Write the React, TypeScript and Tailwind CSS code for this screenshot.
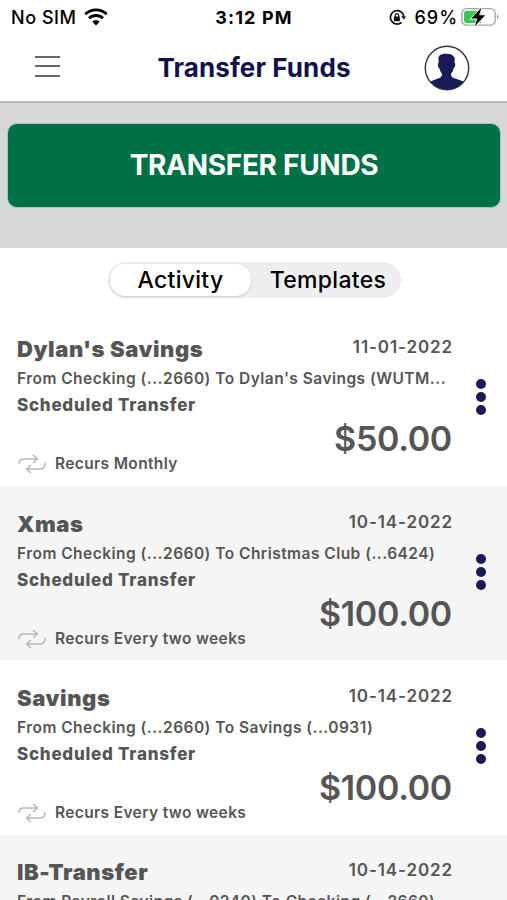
import { useState } from 'react'

interface Transfer {
  name: string
  date: string
  route: string
  status?: string
  amount?: string
  recurs?: string
}

const TRANSFERS: Transfer[] = [
  {
    name: "Dylan's Savings",
    date: '11-01-2022',
    route: "From Checking (...2660) To Dylan's Savings (WUTM...",
    status: 'Scheduled Transfer',
    amount: '$50.00',
    recurs: 'Recurs Monthly',
  },
  {
    name: 'Xmas',
    date: '10-14-2022',
    route: 'From Checking (...2660) To Christmas Club (...6424)',
    status: 'Scheduled Transfer',
    amount: '$100.00',
    recurs: 'Recurs Every two weeks',
  },
  {
    name: 'Savings',
    date: '10-14-2022',
    route: 'From Checking (...2660) To Savings (...0931)',
    status: 'Scheduled Transfer',
    amount: '$100.00',
    recurs: 'Recurs Every two weeks',
  },
  {
    name: 'IB-Transfer',
    date: '10-14-2022',
    route: 'From Payroll Savings (...0240) To Checking (...2660)',
  },
]

function WifiIcon() {
  return (
    <svg width="24" height="18" viewBox="0 0 24 18" fill="none" stroke="#000" strokeWidth="2.9">
      <path d="M1.3 6.3a15.2 15.2 0 0 1 21.4 0" />
      <path d="M5 10.3a10 10 0 0 1 14 0" />
      <path d="M8.2 13.5a5.4 5.4 0 0 1 7.6 0L12 17.4Z" fill="#000" stroke="none" />
    </svg>
  )
}

function RotationLockIcon() {
  return (
    <svg width="17" height="17" viewBox="0 0 17 17" fill="none" stroke="#111" strokeWidth="1.7">
      <path d="M12.6 13.4A6.7 6.7 0 1 1 14.8 7.3" />
      <path d="M12.3 7.3h4.7l-2.2 3.5Z" fill="#111" stroke="none" />
      <rect x="4.9" y="7.6" width="6" height="4.6" rx=".6" fill="#111" stroke="none" />
      <path d="M6.2 8V6.4a1.7 1.7 0 0 1 3.4 0V8" strokeWidth="1.2" />
    </svg>
  )
}

function BatteryIcon() {
  return (
    <svg width="39" height="20" viewBox="0 0 39 20">
      <rect x=".8" y="1.6" width="33.4" height="16.6" rx="4.8" fill="#fff" stroke="#a5a5a5" strokeWidth="1.3" />
      <path d="M6 3.8h14v12.2H6a3 3 0 0 1-3-3V6.8a3 3 0 0 1 3-3Z" fill="#35c759" />
      <path d="M36 7.3c2 .7 2 4.5 0 5.2Z" fill="#a5a5a5" />
      <path
        d="M20.5.5 10.2 11.6h6.1L13.7 19.6 24.2 8.2h-6.1Z"
        fill="#000"
        stroke="#fff"
        strokeWidth="1.6"
        paintOrder="stroke"
      />
    </svg>
  )
}

function AvatarIcon() {
  return (
    <svg width="46" height="46" viewBox="0 0 46 46">
      <path
        d="M6 37c3-2 6.500-2.800 9.500-4 2.300-1 2.800-2.500 2.200-4.700-1.200-1.200-1.900-3-2.200-4.800-1.300-.6-1.900-3.300-1.500-5 .1-.5.500-.7.800-.7-.8-4.500-.3-6.800 1.500-7.700 1.300-1.100 3.500-1.400 5.700-1.400 3.200-.1 5.900.6 7.300 2.200 1.700 1.300 1.700 3.900 1 6.900.5 0 .8.300.9.800.3 1.700-.3 4.100-1.700 4.800-.3 1.800-1 3.600-2.200 4.800-.6 2.200-.1 3.700 2.200 4.700 3 1.200 7.500 2 10.500 4A22 22 0 0 1 6 37Z"
        fill="#1b1a58"
      />
      <circle cx="23" cy="23" r="21.7" fill="none" stroke="#333" strokeWidth="1.4" />
    </svg>
  )
}

function RecurIcon() {
  return (
    <svg width="28" height="20" viewBox="0 0 28 20" fill="none" stroke="#b9b9b9" strokeWidth="1.6" strokeLinecap="round" strokeLinejoin="round">
      <path d="M1 9.5C1 6.500 3 5 6 5h13.500M15.500 1.500 19.500 5l-4 3.500" />
      <path d="M27 9.500c0 3.500-2 5.500-5 5.500H8.500M12.500 11.500l-4 3.500 4 3.500" />
    </svg>
  )
}

function StatusBar() {
  return (
    <div className="flex h-[34px] shrink-0 items-center justify-between pl-[11px] pr-[7px] text-[18px]">
      <div className="flex flex-1 items-center gap-[7px] font-medium">
        <span className="tracking-[0.55px]">No SIM</span>
        <WifiIcon />
      </div>
      <span className="mr-[3px] font-bold tracking-[1.15px]">3:12 PM</span>
      <div className="flex flex-1 items-center justify-end font-medium">
        <RotationLockIcon />
        <span className="ml-2 mr-[3px] tracking-[1px]">69%</span>
        <BatteryIcon />
      </div>
    </div>
  )
}

function TransferRow({ transfer }: { transfer: Transfer }) {
  return (
    <li className="flex h-[174.3px] shrink-0 pl-[17px] text-[#555] even:bg-[#f5f5f5]">
      <div className="w-[435px] pt-[25px]">
        <div className="flex h-7 items-start justify-between">
          <h2 className="text-[22px] leading-[27px] font-black tracking-[0.6px]">{transfer.name}</h2>
          <span className="mr-[-1px] text-[17px] leading-[23px] font-semibold tracking-[0.9px]">{transfer.date}</span>
        </div>
        <p className="mt-[5px] text-[15.5px] leading-5 font-semibold tracking-[0.47px] whitespace-nowrap">
          {transfer.route}
        </p>
        {transfer.status && (
          <>
            <p className="mt-[6px] text-[17px] leading-5 font-extrabold tracking-[0.75px]">{transfer.status}</p>
            <div className="flex h-[61px] justify-between">
              <div className="flex items-end gap-[9px] pb-[2px] pl-px">
                <RecurIcon />
                <span className="text-[15.5px] leading-5 font-semibold tracking-[0.36px]">{transfer.recurs}</span>
              </div>
              <span className="mt-1 text-[34px] leading-10 font-semibold tracking-[-0.3px]">{transfer.amount}</span>
            </div>
          </>
        )}
      </div>
      {transfer.status && (
        <button aria-label="More options" className="mt-[68px] ml-6 flex h-9 flex-col justify-between">
          <i className="size-[10px] rounded-full bg-[#1b1a58]" />
          <i className="size-[10px] rounded-full bg-[#1b1a58]" />
          <i className="size-[10px] rounded-full bg-[#1b1a58]" />
        </button>
      )}
    </li>
  )
}

export default function App() {
  const [tab, setTab] = useState('Activity')

  return (
    <div className="flex h-[900px] w-[507px] flex-col overflow-hidden bg-white font-['Inter',sans-serif] text-black">
      <StatusBar />
      <header className="flex h-[69px] shrink-0 items-center justify-between border-b-2 border-[#b8b8b8] pr-[37px] pl-[35px]">
        <button aria-label="Menu" className="mr-[24px] mb-[3px] flex h-[21px] w-[25px] flex-col justify-between">
          <i className="h-[2px] w-full bg-[#69666e]" />
          <i className="h-[2px] w-full bg-[#69666e]" />
          <i className="h-[2px] w-full bg-[#69666e]" />
        </button>
        <h1 className="text-[26px] font-bold tracking-[0.1px] text-[#11124d]">Transfer Funds</h1>
        <AvatarIcon />
      </header>
      <div className="h-[145px] shrink-0 bg-[#d7d7d7] pt-5 pr-[6px] pl-[7px]">
        <button className="flex h-[85px] w-full items-center justify-center rounded-[10px] border border-[#9dcbb8] bg-[#007047] pb-[2px] text-[28px] font-bold tracking-[-0.3px] text-white">
          TRANSFER FUNDS
        </button>
      </div>
      <div className="flex h-[63.3px] shrink-0 items-start justify-center pt-[14px]">
        <div className="ml-[2px] flex h-9 w-[293px] rounded-full bg-[#eeeef0] p-[2px]">
          {['Activity', 'Templates'].map((t) => (
            <button
              key={t}
              onClick={() => setTab(t)}
              className={`flex items-center justify-center pt-px text-[23px] font-medium tracking-[0.3px] ${
                t === 'Activity' ? 'w-[141px]' : 'w-[148px] pl-[6px]'
              } ${tab === t ? 'rounded-[15px] bg-white shadow-[0_1px_3px_rgba(0,0,0,0.15)]' : ''}`}
            >
              {t}
            </button>
          ))}
        </div>
      </div>
      <ul>
        {TRANSFERS.map((t) => (
          <TransferRow key={t.name} transfer={t} />
        ))}
      </ul>
    </div>
  )
}
